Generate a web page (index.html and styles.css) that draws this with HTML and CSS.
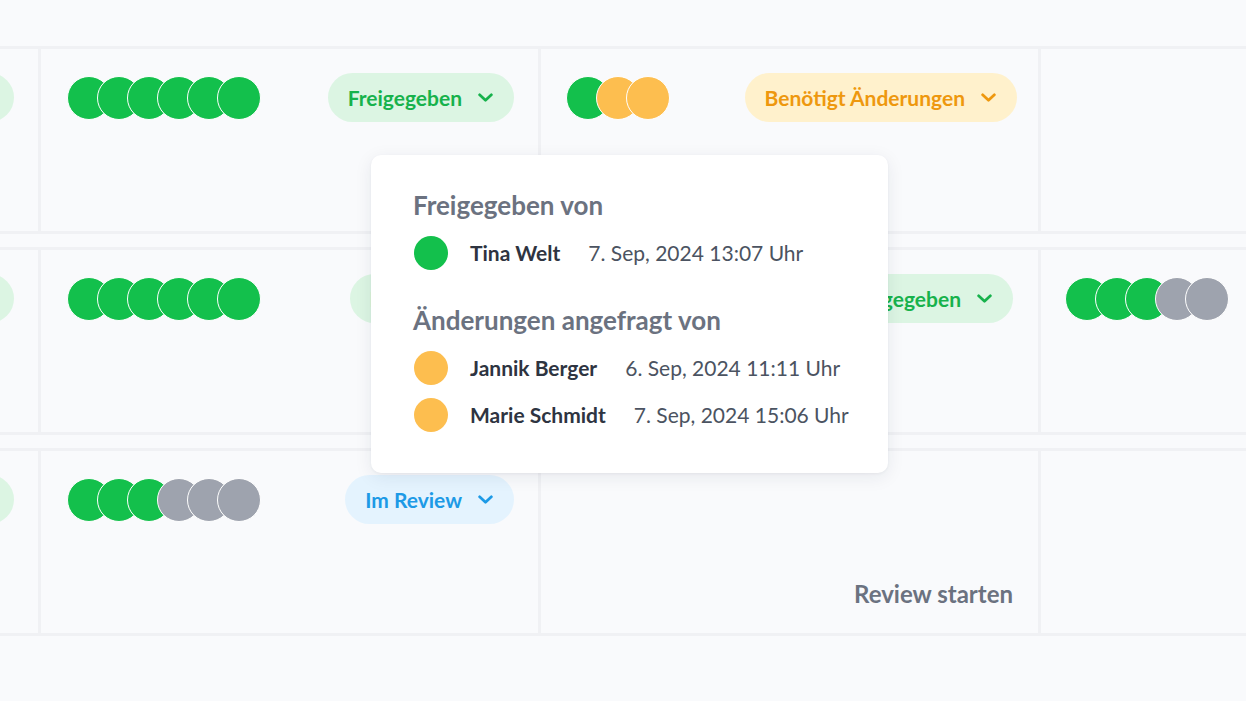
FILE: index.html
```html
<!DOCTYPE html>
<html lang="de">
<head>
<meta charset="utf-8">
<title>Review</title>
<link rel="stylesheet" href="styles.css">
</head>
<body>
<div class="board">
  <div class="row">
    <div class="cell">
      <div class="top"><span></span>
        <span class="badge badge--green">Freigegeben<svg class="chev" viewBox="0 0 14 8"><polyline points="1.5,1.5 7,6.5 12.5,1.5"/></svg></span>
      </div>
    </div>
    <div class="cell cell--c1">
      <div class="top">
        <div class="avatars"><i class="av g"></i><i class="av g"></i><i class="av g"></i><i class="av g"></i><i class="av g"></i><i class="av g"></i></div>
        <span class="badge badge--green">Freigegeben<svg class="chev" viewBox="0 0 14 8"><polyline points="1.5,1.5 7,6.5 12.5,1.5"/></svg></span>
      </div>
    </div>
    <div class="cell cell--c2 cell--pr21">
      <div class="top">
        <div class="avatars"><i class="av g"></i><i class="av o"></i><i class="av o"></i></div>
        <span class="badge badge--orange">Benötigt Änderungen<svg class="chev" viewBox="0 0 14 8"><polyline points="1.5,1.5 7,6.5 12.5,1.5"/></svg></span>
      </div>
    </div>
    <div class="cell cell--c3"></div>
  </div>

  <div class="row">
    <div class="cell">
      <div class="top"><span></span>
        <span class="badge badge--green">Freigegeben<svg class="chev" viewBox="0 0 14 8"><polyline points="1.5,1.5 7,6.5 12.5,1.5"/></svg></span>
      </div>
    </div>
    <div class="cell cell--c1">
      <div class="top">
        <div class="avatars"><i class="av g"></i><i class="av g"></i><i class="av g"></i><i class="av g"></i><i class="av g"></i><i class="av g"></i></div>
        <span class="badge badge--green">Freigeben<svg class="chev" viewBox="0 0 14 8"><polyline points="1.5,1.5 7,6.5 12.5,1.5"/></svg></span>
      </div>
    </div>
    <div class="cell cell--c2 cell--pr25">
      <div class="top">
        <div class="avatars"><i class="av g"></i><i class="av o"></i><i class="av o"></i></div>
        <span class="badge badge--green">Freigegeben<svg class="chev" viewBox="0 0 14 8"><polyline points="1.5,1.5 7,6.5 12.5,1.5"/></svg></span>
      </div>
    </div>
    <div class="cell cell--c3">
      <div class="top">
        <div class="avatars"><i class="av g"></i><i class="av g"></i><i class="av g"></i><i class="av x"></i><i class="av x"></i></div>
      </div>
    </div>
  </div>

  <div class="row">
    <div class="cell">
      <div class="top"><span></span>
        <span class="badge badge--green">Freigegeben<svg class="chev" viewBox="0 0 14 8"><polyline points="1.5,1.5 7,6.5 12.5,1.5"/></svg></span>
      </div>
    </div>
    <div class="cell cell--c1">
      <div class="top">
        <div class="avatars"><i class="av g"></i><i class="av g"></i><i class="av g"></i><i class="av x"></i><i class="av x"></i><i class="av x"></i></div>
        <span class="badge badge--blue">Im Review<svg class="chev" viewBox="0 0 14 8"><polyline points="1.5,1.5 7,6.5 12.5,1.5"/></svg></span>
      </div>
    </div>
    <div class="cell cell--c2 cell--end">
      <span class="start">Review starten</span>
    </div>
    <div class="cell cell--c3"></div>
  </div>
</div>

<div class="popover">
  <h3 class="pop-title">Freigegeben von</h3>
  <div class="pop-row pop-row--first"><i class="dot g"></i><span class="name">Tina Welt</span><span class="date">7. Sep, 2024 13:07 Uhr</span></div>
  <h3 class="pop-title pop-title--second">Änderungen angefragt von</h3>
  <div class="pop-row pop-row--first"><i class="dot o"></i><span class="name">Jannik Berger</span><span class="date">6. Sep, 2024 11:11 Uhr</span></div>
  <div class="pop-row"><i class="dot o"></i><span class="name">Marie Schmidt</span><span class="date">7. Sep, 2024 15:06 Uhr</span></div>
</div>
</body>
</html>
```

FILE: styles.css
```css
* { box-sizing: border-box; }
html, body {
  margin: 0;
  padding: 0;
  width: 1246px;
  height: 701px;
  overflow: hidden;
  background: #f9fafc;
  font-family: Lato, "Noto Sans", sans-serif;
}
.board {
  padding-top: 46px;
  display: flex;
  flex-direction: column;
  gap: 13px;
  margin-left: -459px;
}
.row {
  display: flex;
  gap: 3px;
  padding: 3px 0;
  background: #f0f1f4;
  width: max-content;
}
.cell {
  flex: none;
  width: 497px;
  height: 182px;
  background: #f9fafc;
  padding: 24px 24px 24px 25px;
}
.cell--c1 { padding-left: 26px; }
.cell--pr21 { padding-right: 21px; }
.cell--pr25 { padding-right: 25px; }
.cell--c3 { padding-left: 24px; }
.cell--end {
  display: flex;
  justify-content: flex-end;
  align-items: flex-end;
  padding-right: 25px;
}
.top {
  display: flex;
  align-items: center;
  justify-content: space-between;
  height: 49px;
}
.avatars { display: flex; }
.av {
  display: block;
  width: 44px;
  height: 44px;
  border-radius: 50%;
  border: 1.5px solid #ffffff;
  margin-left: -14px;
}
.av:first-child { margin-left: 0; }
.g { background: #13c04c; }
.o { background: #fdbe4f; }
.x { background: #9ea3ae; }

.badge {
  display: inline-flex;
  align-items: center;
  height: 49px;
  padding: 0 21px 0 20px;
  border-radius: 25px;
  font-weight: 700;
  font-size: 21px;
  white-space: nowrap;
}
.chev {
  width: 15px;
  height: 9px;
  margin-left: 16px;
  fill: none;
  stroke: currentColor;
  stroke-width: 2.6;
  stroke-linecap: round;
  stroke-linejoin: round;
}
.badge--green { background: #dcf5e3; color: #17b24c; }
.badge--orange { background: #fff1cc; color: #ee980e; }
.badge--blue { background: #e4f3fe; color: #1d9ae6; }

.start {
  font-weight: 700;
  font-size: 24px;
  line-height: 1.2;
  color: #6b7280;
}

.popover {
  position: absolute;
  left: 371px;
  top: 155px;
  width: 517px;
  background: #ffffff;
  border-radius: 10px;
  box-shadow: 0 4px 18px rgba(30, 40, 60, 0.08), 0 1px 3px rgba(30, 40, 60, 0.05);
  padding: 35px 40px 35px 43px;
}
.pop-title {
  margin: 0 0 0 -1px;
  font-size: 26px;
  line-height: 30px;
  font-weight: 700;
  color: #6b7280;
}
.pop-title--second { margin-top: 29px; }
.pop-row {
  display: flex;
  align-items: center;
  height: 47px;
  font-size: 21px;
  white-space: nowrap;
}
.pop-row--first { margin-top: 9px; }
.dot {
  display: block;
  width: 34px;
  height: 34px;
  border-radius: 50%;
  margin-right: 22px;
  flex: none;
}
.name {
  font-weight: 700;
  color: #2e3441;
  margin-right: 28px;
}
.date {
  color: #4b5361;
}
```
